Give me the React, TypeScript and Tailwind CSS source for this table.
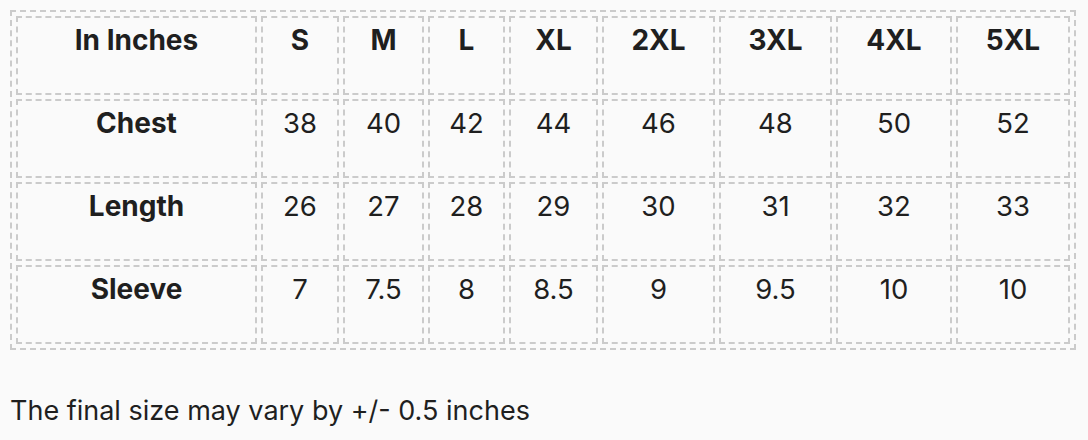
import React from 'react';

const sizes = ['S', 'M', 'L', 'XL', '2XL', '3XL', '4XL', '5XL'];

const rows: { label: string; values: string[] }[] = [
  { label: 'Chest', values: ['38', '40', '42', '44', '46', '48', '50', '52'] },
  { label: 'Length', values: ['26', '27', '28', '29', '30', '31', '32', '33'] },
  { label: 'Sleeve', values: ['7', '7.5', '8', '8.5', '9', '9.5', '10', '10'] },
];

// column widths measured off the reference (border box)
const colWidths = [
  'w-[241px]',
  'w-[78px]',
  'w-[81px]',
  'w-[77px]',
  'w-[89px]',
  'w-[113px]',
  'w-[113px]',
  'w-[116px]',
  'w-[114px]',
];

const cell = 'h-[79px] border-2 border-dashed border-[#cbcbcb] px-1 pt-[6px] text-center align-top leading-[33px]';

export default function App() {
  return (
    <div
      className="min-h-screen bg-[#fafafa] p-2.5 text-[#1f1f1f]"
      style={{ fontFamily: 'Inter, "Noto Sans", sans-serif' }}
    >
      <table className="table-fixed border-separate border-spacing-1 border-2 border-dashed border-[#cbcbcb] w-[1066px]">
        <thead>
          <tr>
            <th className={`${cell} ${colWidths[0]} text-[28px] font-bold`}>In Inches</th>
            {sizes.map((s, i) => (
              <th key={s} className={`${cell} ${colWidths[i + 1]} text-[28px] font-bold`}>
                {s}
              </th>
            ))}
          </tr>
        </thead>
        <tbody>
          {rows.map(r => (
            <tr key={r.label}>
              <td className={`${cell} text-[28px] font-bold`}>{r.label}</td>
              {r.values.map((v, i) => (
                <td key={i} className={`${cell} text-[27.5px]`}>
                  {v}
                </td>
              ))}
            </tr>
          ))}
        </tbody>
      </table>
      <p className="mt-[44px] text-[27px] leading-[33px]">The final size may vary by +/- 0.5 inches</p>
    </div>
  );
}
